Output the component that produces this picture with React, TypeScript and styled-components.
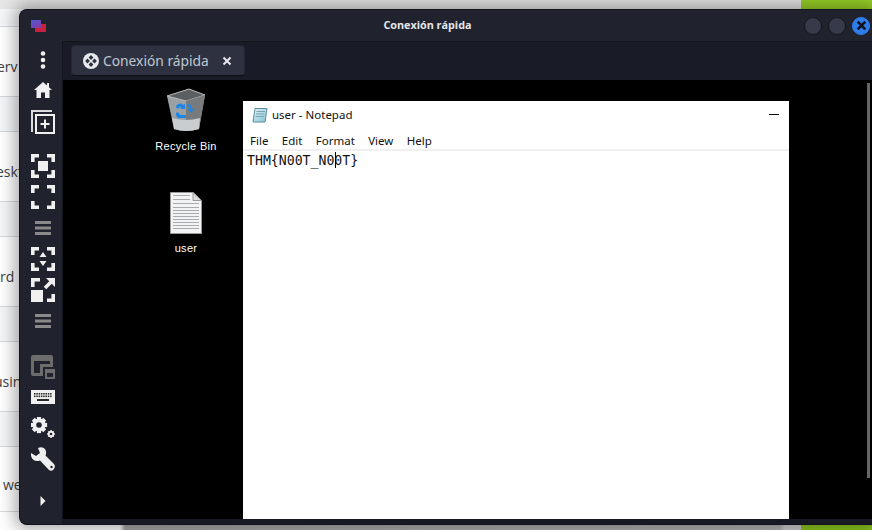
import styled, { createGlobalStyle } from "styled-components";
import { ReactNode } from "react";

const Global = createGlobalStyle`
  html, body {
    margin: 0;
    padding: 0;
    width: 872px;
    height: 530px;
    overflow: hidden;
    background: #fff;
  }
  * { box-sizing: border-box; }
`;

const Page = styled.div`
  position: relative;
  width: 872px;
  height: 530px;
  overflow: hidden;
  font-family: "Open Sans", sans-serif;
`;

/* the web page sitting behind the remmina window */
const BehindList = styled.div`
  display: flex;
  flex-direction: column;
  width: 872px;
`;

const BehindTop = styled.div`
  height: 9px;
  background: linear-gradient(90deg, #e6e6e6 0, #e6e6e6 801px, #9ad228 801px);
`;

const BehindRow = styled.div<{ $h: number; $tint?: boolean; $indent?: number }>`
  height: ${(p) => p.$h}px;
  border-bottom: 1px solid #d6d8dc;
  background: ${(p) => (p.$tint ? "#f5f6f8" : "#fff")};
  padding-top: ${(p) => (p.$h - 10) / 2}px;
  text-indent: ${(p) => p.$indent ?? 0}px;
  font-size: 14px;
  line-height: 20px;
  color: #3f4348;
  white-space: nowrap;
`;

const BehindBottom = styled.div`
  position: absolute;
  left: 0;
  right: 0;
  bottom: 0;
  height: 5px;
  background: linear-gradient(90deg, #fff 0, #fff 120px, #a8a8a8 125px, #b5b5b5 780px, #d2d2d2 785px, #d2d2d2 801px, #8fc820 801px);
`;

const Window = styled.div`
  position: absolute;
  left: 19px;
  top: 9px;
  width: 853px;
  height: 516px;
  display: grid;
  grid-template-columns: 42px 1fr;
  grid-template-rows: 31px 1fr;
  background: #20232e;
  border: 1px solid #11131a;
  border-right: 0;
  border-radius: 8px 0 0 8px;
  box-shadow: 0 0 16px 5px rgba(0, 0, 0, 0.32);
  overflow: hidden;
`;

const TitleBar = styled.div`
  grid-column: 1 / 3;
  display: flex;
  align-items: center;
  justify-content: space-between;
  padding: 0 2px 0 11px;
  color: #e4e6ea;
  font-size: 10.8px;
  font-weight: 700;
`;

const TitleText = styled.span`
  position: absolute;
  left: 0;
  right: 37px;
  top: 7px;
  text-align: center;
`;

const Controls = styled.div`
  display: flex;
  gap: 6px;
`;

const Round = styled.div<{ $on?: boolean }>`
  width: 18px;
  height: 18px;
  border-radius: 50%;
  background: ${(p) => (p.$on ? "#2f7dea" : "#363a49")};
  border: 1px solid ${(p) => (p.$on ? "#2f7dea" : "#14161d")};
  display: flex;
  align-items: center;
  justify-content: center;
`;

const SideBar = styled.div`
  display: flex;
  flex-direction: column;
  align-items: center;
  padding: 4px 0 0 3px;
  min-height: 0;
  overflow: hidden;
  color: #f0f0f0;
`;

const SideSlot = styled.div<{ $h: number }>`
  height: ${(p) => p.$h}px;
  flex: none;
  width: 100%;
  display: flex;
  align-items: center;
  justify-content: center;
`;

const Main = styled.div`
  display: flex;
  flex-direction: column;
  min-width: 0;
  min-height: 0;
  background: #171923;
  border-top: 1px solid #14161d;
  border-left: 1px solid #14161d;
`;

const TabBar = styled.div`
  height: 38px;
  padding: 3px 0 0 8px;
  display: flex;
  align-items: flex-start;
  background: #191b26;
`;

const Tab = styled.div`
  width: 174px;
  height: 31px;
  background: #2e3240;
  border: 1px solid #232633;
  border-bottom: 1px solid #0f1016;
  border-radius: 4px;
  display: flex;
  align-items: center;
  padding-left: 11px;
  color: #bfc6d0;
  font-family: "Noto Sans", sans-serif;
  font-size: 13.8px;
`;

const TabLabel = styled.span`
  margin-left: 4px;
  flex: 1;
  white-space: nowrap;
`;

const TabClose = styled.span`
  display: flex;
  margin-right: 12px;
`;

const Remote = styled.div`
  position: relative;
  height: 439px;
  background: #000;
`;

const ScrollEdge = styled.div`
  position: absolute;
  top: 3px;
  right: 2px;
  width: 3px;
  height: 395px;
  background: #666;
`;

const DesktopIcon = styled.div<{ $x: number; $y: number }>`
  position: absolute;
  left: ${(p) => p.$x}px;
  top: ${(p) => p.$y}px;
  width: 76px;
  display: flex;
  flex-direction: column;
  align-items: center;
`;

const IconLabel = styled.span<{ $gap: number }>`
  margin-top: ${(p) => p.$gap}px;
  color: #fff;
  font-family: "Liberation Sans", sans-serif;
  font-size: 11px;
  letter-spacing: 0.3px;
  line-height: 14px;
`;

const Notepad = styled.div`
  position: absolute;
  left: 180px;
  top: 21px;
  width: 546px;
  height: 418px;
  background: #fff;
  color: #111;
  font-family: "Noto Sans", sans-serif;
  display: flex;
  flex-direction: column;
`;

const NoteTitle = styled.div`
  height: 28px;
  display: flex;
  align-items: center;
  padding: 0 10px 1px 9px;
  font-size: 11.5px;
  gap: 4px;
`;

const NoteTitleText = styled.span`
  flex: 1;
`;

const Minimize = styled.div`
  width: 10px;
  height: 1px;
  background: #000;
`;

const NoteMenu = styled.div`
  height: 22px;
  padding: 4px 0 0 7px;
  display: flex;
  gap: 13.4px;
  font-size: 11.5px;
  line-height: 16px;
  border-bottom: 2px solid #f0f0f0;
`;

const NoteBody = styled.div`
  position: relative;
  padding: 1px 0 0 4px;
  font-family: "DejaVu Sans Mono", monospace;
  font-size: 13.2px;
  line-height: 17px;
  white-space: pre;
`;

const Caret = styled.span`
  position: absolute;
  left: 92px;
  top: 1px;
  width: 1px;
  height: 16px;
  background: #000;
`;

const RecycleBin = () => (
  <svg width="40" height="44" viewBox="0 0 40 44">
    <path d="M1 8 L23 1 L39 7 L33 41 Q20 45 8 41 Z" fill="#9aa0a3" />
    <path d="M1 8 L23 1 L39 7 L20 13 Z" fill="#5b5f61" stroke="#b8bcbe" strokeWidth="1" />
    <path d="M20 13 L39 7 L33 41 Q26 43 20 43 Z" fill="#777b7e" />
    <path d="M6 30 Q20 34 34 30 L33 41 Q20 45 8 41 Z" fill="#c9cdd0" />
    <path d="M10 20 a4 4 0 0 1 7 -3 l2 -1 v5 h-5 l1.500 -1.500 a2 2 0 0 0 -3 1 z" fill="#1c86e8" />
    <path d="M22 16 a5 5 0 0 1 4 5 l2 0 -3 4 -3 -4 h1.500 a3 3 0 0 0 -2 -3 z" fill="#1c86e8" />
    <path d="M12 24 l2 3 h6 v3 h-5 a4 4 0 0 1 -5 -5 z" fill="#1c86e8" />
  </svg>
);

const TextFile = () => (
  <svg width="32" height="42" viewBox="0 0 32 42">
    <path d="M0.500 0.500 H23 L31.500 9 V41.500 H0.500 Z" fill="#f3f3f3" stroke="#9b9b9b" />
    <path d="M23 0.500 V8.500 H31.500 Z" fill="#dcdcdc" stroke="#9b9b9b" />
    {[3, 7, 11, 15, 18, 21, 24, 27, 30, 33, 36].map((y) => (
      <rect key={y} x="3" y={y} width={y < 11 ? 17 : 26} height="1" fill="#a8acb0" />
    ))}
  </svg>
);

const NotepadIcon = () => (
  <svg width="16" height="16" viewBox="0 0 16 16">
    <defs>
      <linearGradient id="padFill" x1="0" y1="0" x2="1" y2="1">
        <stop offset="0" stopColor="#e4f3f6" />
        <stop offset="1" stopColor="#7fc4d8" />
      </linearGradient>
    </defs>
    <path d="M3 1.500 H15 L13 15 H1 Z" fill="url(#padFill)" stroke="#5d8d9a" />
    <path d="M4.500 4.500 H13 M4 7 H12.500 M3.500 9.500 H12" stroke="#7ba5b0" />
  </svg>
);

const Dots = () => (
  <svg width="6" height="18" viewBox="0 0 6 18" fill="currentColor">
    <circle cx="3" cy="2.500" r="2.300" />
    <circle cx="3" cy="9" r="2.300" />
    <circle cx="3" cy="15.500" r="2.300" />
  </svg>
);

const Home = () => (
  <svg width="18" height="16" viewBox="0 0 18 16" fill="currentColor">
    <path d="M9 0 L13 3.500 V1 H15 V5.300 L18 8 H15.500 V16 H11 V10.500 H7 V16 H2.500 V8 H0 Z" />
  </svg>
);

const NewConn = () => (
  <svg width="24" height="24" viewBox="0 0 24 24" fill="none" stroke="currentColor" strokeWidth="2">
    <path d="M1 22 V1 H21" opacity="0.9" />
    <rect x="5" y="5" width="18" height="18" />
    <path d="M14 9.500 V18.500 M9.500 14 H18.500" strokeWidth="2" />
  </svg>
);

/* corner brackets, shared by the screen-mode icons */
const Corners = ({ children }: { children?: ReactNode }) => (
  <svg width="24" height="24" viewBox="0 0 24 24" fill="none" stroke="currentColor" strokeWidth="3.600">
    <path d="M1.800 8 V1.800 H8 M16 1.800 H22.200 V8 M22.200 16 V22.200 H16 M8 22.200 H1.800 V16" />
    {children}
  </svg>
);

const ScaleMode = () => (
  <svg width="24" height="24" viewBox="0 0 24 24" fill="none" stroke="currentColor" strokeWidth="3.600">
    <path d="M9 1.800 H1.800 V9 M16 22.200 H22.200 V16" />
    <rect x="0" y="12" width="12" height="12" fill="currentColor" stroke="none" />
    <path d="M14 10 L20 4" />
    <path d="M15 0 H24 V9 Z" fill="currentColor" stroke="none" />
  </svg>
);

const Sep = () => (
  <svg width="16" height="14" viewBox="0 0 16 14" fill="#8a8a8a">
    <rect y="0" width="16" height="3" />
    <rect y="5.500" width="16" height="3" />
    <rect y="11" width="16" height="3" />
  </svg>
);

const Pip = () => (
  <svg width="24" height="24" viewBox="0 0 24 24" fill="#6c6c6c">
    <path d="M0 2 Q0 0 2 0 H20 Q22 0 22 2 V12 H12 V21 H2 Q0 21 0 19 Z M3 6 V18 H9 V9 H19 V6 Z" fillRule="evenodd" />
    <path d="M14 14 H24 V24 H14 Z M16 18 V22 H22 V18 Z" fillRule="evenodd" />
  </svg>
);

const Keyboard = () => (
  <svg width="24" height="14" viewBox="0 0 24 14">
    <rect width="24" height="14" fill="#f0f0f0" />
    {[0, 1].map((r) =>
      [0, 1, 2, 3, 4, 5, 6, 7].map((c) => (
        <rect key={`${r}-${c}`} x={3 + c * 2.300} y={3 + r * 2.500} width="1.500" height="1.600" fill="#2a2a2a" />
      ))
    )}
    <rect x="6" y="9" width="12" height="2" fill="#2a2a2a" />
  </svg>
);

const gear = (cx: number, cy: number, r: number, hole: number) => {
  const teeth = [0, 45, 90, 135].map((a) => (
    <rect
      key={a}
      x={cx - r * 0.32}
      y={cy - r * 1.25}
      width={r * 0.64}
      height={r * 2.5}
      transform={`rotate(${a} ${cx} ${cy})`}
    />
  ));
  return (
    <g>
      {teeth}
      <circle cx={cx} cy={cy} r={r} />
      <circle cx={cx} cy={cy} r={hole} fill="#20232e" />
    </g>
  );
};

const Gears = () => (
  <svg width="24" height="22" viewBox="0 0 24 22" fill="currentColor">
    {gear(8, 8, 6.500, 2.800)}
    {gear(20, 17, 3, 1.300)}
  </svg>
);

const Wrench = () => (
  <svg width="24" height="25" viewBox="0 0 24 25" fill="currentColor">
    <path d="M0 6 L5 9 L9 6 L7 1 Q11 -1 14 2 Q16 5 14.500 8.500 L23 17 Q25 20 22.500 22.500 Q20 25 17.500 22.500 L9 13.500 Q4 15 1.500 12 Q-0.500 9 0 6 Z" />
    <circle cx="20.500" cy="20" r="1.200" fill="#20232e" />
  </svg>
);

const Arrow = () => (
  <svg width="6" height="10" viewBox="0 0 6 10" fill="currentColor">
    <path d="M0.500 0 L5.500 5 L0.500 10 Z" />
  </svg>
);

const QuickIcon = () => (
  <svg width="16" height="16" viewBox="0 0 16 16">
    <circle cx="8" cy="8" r="8" fill="#e8eaee" />
    <g fill="#2e3240">
      <rect x="6.300" y="2.800" width="3.400" height="3.400" transform="rotate(45 8 4.500)" />
      <rect x="6.300" y="9.800" width="3.400" height="3.400" transform="rotate(45 8 11.500)" />
      <rect x="2.800" y="6.300" width="3.400" height="3.400" transform="rotate(45 4.500 8)" />
      <rect x="9.800" y="6.300" width="3.400" height="3.400" transform="rotate(45 11.500 8)" />
    </g>
  </svg>
);

const CloseMark = ({ size, color, width }: { size: number; color: string; width: number }) => (
  <svg width={size} height={size} viewBox="0 0 10 10" stroke={color} strokeWidth={width}>
    <path d="M1.500 1.500 L8.500 8.500 M8.500 1.500 L1.500 8.500" />
  </svg>
);

const AppLogo = () => (
  <svg width="15" height="12" viewBox="0 0 15 12">
    <defs>
      <linearGradient id="logoBack" x1="0" y1="0" x2="1" y2="1">
        <stop offset="0" stopColor="#4a58d8" />
        <stop offset="1" stopColor="#8a3aa0" />
      </linearGradient>
    </defs>
    <rect x="4" y="4" width="11" height="8" fill="#c8203f" />
    <rect x="0" y="0" width="10" height="8" fill="url(#logoBack)" />
  </svg>
);

const App = () => (
  <Page>
    <Global />
    <BehindList>
      <BehindTop />
      <BehindRow $h={18} $tint />
      <BehindRow $h={70} $indent={-3}>erv</BehindRow>
      <BehindRow $h={35} $tint />
      <BehindRow $h={70} $indent={-4}>eskt</BehindRow>
      <BehindRow $h={35} $tint />
      <BehindRow $h={70}>rd</BehindRow>
      <BehindRow $h={35} $tint />
      <BehindRow $h={70} $indent={-6}>usin</BehindRow>
      <BehindRow $h={35} $tint />
      <BehindRow $h={65} $indent={3}>we</BehindRow>
    </BehindList>
    <BehindBottom />
    <Window>
      <TitleBar>
        <AppLogo />
        <TitleText>Conexión rápida</TitleText>
        <Controls>
          <Round />
          <Round />
          <Round $on>
            <CloseMark size={11} color="#0e1320" width={2.400} />
          </Round>
        </Controls>
      </TitleBar>
      <SideBar>
        <SideSlot $h={30}><Dots /></SideSlot>
        <SideSlot $h={30}><Home /></SideSlot>
        <SideSlot $h={34}><NewConn /></SideSlot>
        <SideSlot $h={12} />
        <SideSlot $h={30}>
          <Corners>
            <rect x="7" y="7" width="10" height="10" fill="currentColor" stroke="none" />
          </Corners>
        </SideSlot>
        <SideSlot $h={31}><Corners /></SideSlot>
        <SideSlot $h={31}><Sep /></SideSlot>
        <SideSlot $h={31}>
          <Corners>
            <path d="M12 5 L15.500 10 H8.500 Z M12 19 L15.500 14 H8.500 Z" fill="currentColor" stroke="none" />
          </Corners>
        </SideSlot>
        <SideSlot $h={31}><ScaleMode /></SideSlot>
        <SideSlot $h={31}><Sep /></SideSlot>
        <SideSlot $h={16} />
        <SideSlot $h={30}><Pip /></SideSlot>
        <SideSlot $h={30}><Keyboard /></SideSlot>
        <SideSlot $h={32}><Gears /></SideSlot>
        <SideSlot $h={30}><Wrench /></SideSlot>
        <SideSlot $h={54}><Arrow /></SideSlot>
      </SideBar>
      <Main>
        <TabBar>
          <Tab>
            <QuickIcon />
            <TabLabel>Conexión rápida</TabLabel>
            <TabClose>
              <CloseMark size={10} color="#e4e6ea" width={2} />
            </TabClose>
          </Tab>
        </TabBar>
        <Remote>
          <DesktopIcon $x={85} $y={8}>
            <RecycleBin />
            <IconLabel $gap={7}>Recycle Bin</IconLabel>
          </DesktopIcon>
          <DesktopIcon $x={85} $y={112}>
            <TextFile />
            <IconLabel $gap={7}>user</IconLabel>
          </DesktopIcon>
          <Notepad>
            <NoteTitle>
              <NotepadIcon />
              <NoteTitleText>user - Notepad</NoteTitleText>
              <Minimize />
            </NoteTitle>
            <NoteMenu>
              <span>File</span>
              <span>Edit</span>
              <span>Format</span>
              <span>View</span>
              <span>Help</span>
            </NoteMenu>
            <NoteBody>
              THM{"{"}N00T_N00T{"}"}
              <Caret />
            </NoteBody>
          </Notepad>
          <ScrollEdge />
        </Remote>
      </Main>
    </Window>
  </Page>
);

export default App;
